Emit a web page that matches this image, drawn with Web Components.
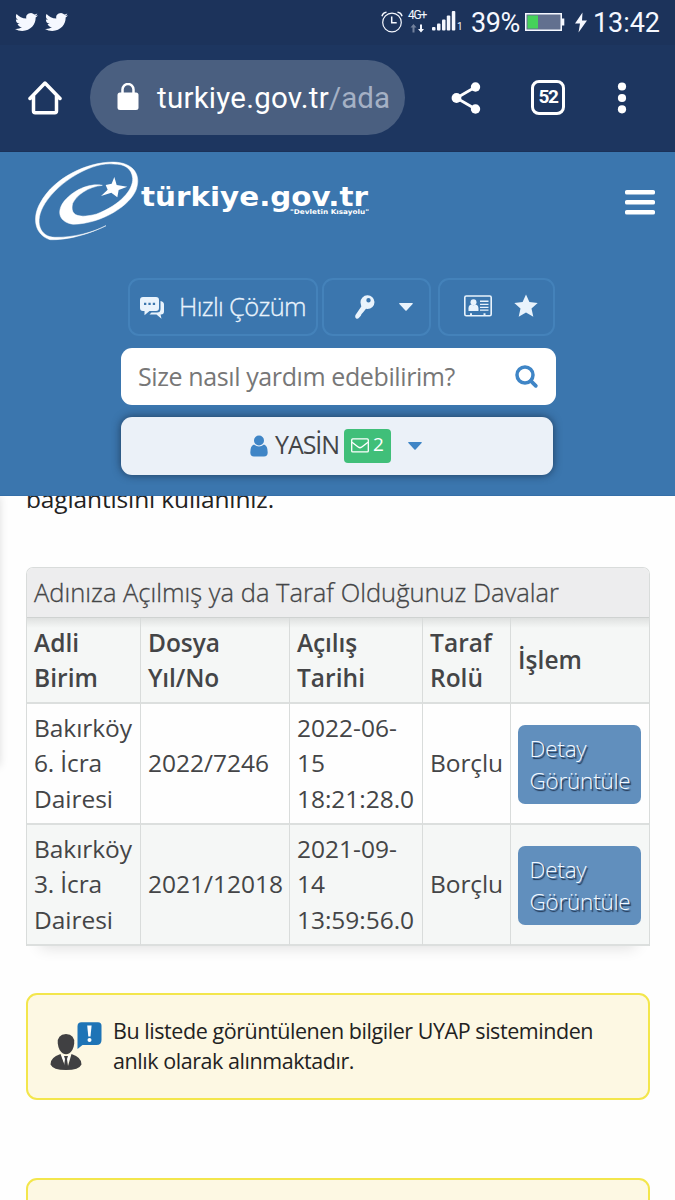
<!DOCTYPE html>
<html lang="tr">
<head>
<meta charset="utf-8">
<title>türkiye.gov.tr</title>
<style>
html,body{margin:0;background:#fefefe}
body{width:675px;height:1200px;overflow:hidden;font-family:"Open Sans","Noto Sans",sans-serif;color:#444547}
</style>
</head>
<body>
<phone-screen></phone-screen>
<script>
function define(name, markup, ready) {
  const template = document.createElement('template');
  template.innerHTML = markup;
  customElements.define(name, class extends HTMLElement {
    connectedCallback() {
      if (this.shadowRoot) return;
      this.attachShadow({ mode: 'open' }).append(template.content.cloneNode(true));
      if (ready) ready(this, this.shadowRoot);
    }
  });
}

/* One line of text, tracked so that it fills the width given in its w attribute. */
define('text-line', `<style>:host{display:block;white-space:nowrap}span{display:inline-block;white-space:pre}</style><span></span>`, (el, root) => {
  const s = root.querySelector('span');
  s.textContent = el.getAttribute('text');
  const w = +el.getAttribute('w');
  if (w) s.style.letterSpacing = ((w - s.getBoundingClientRect().width) / s.textContent.length).toFixed(3) + 'px';
});

const icons = {
  bird: ['0 0 24 24', '<path d="M23.953 4.57a10 10 0 01-2.825.775 4.958 4.958 0 002.163-2.723c-.951.555-2.005.959-3.127 1.184a4.92 4.92 0 00-8.384 4.482C7.69 8.095 4.067 6.13 1.64 3.162a4.822 4.822 0 00-.666 2.475c0 1.71.87 3.213 2.188 4.096a4.904 4.904 0 01-2.228-.616v.06a4.923 4.923 0 003.946 4.827 4.996 4.996 0 01-2.212.085 4.936 4.936 0 004.604 3.417 9.867 9.867 0 01-6.102 2.105c-.39 0-.779-.023-1.17-.067a13.995 13.995 0 007.557 2.209c9.053 0 13.998-7.496 13.998-13.985 0-.21 0-.42-.015-.63A9.935 9.935 0 0024 4.59z"/>'],
  alarm: ['0 0 22 22', '<g fill="none" stroke="currentColor" stroke-width="1.2"><circle cx="11" cy="11.5" r="9.3"/><path d="M1 5.2C1.6 2.8 3.200 1.500 5.500 1.300M21 5.200C20.400 2.800 18.800 1.500 16.500 1.300M10.700 5.500v6.200h5" stroke-width="1.500"/></g>'],
  updown: ['0 0 14 9', '<path d="M3.500 0L6.500 3.500H4.500V8.500H2.500V3.500H.5z" opacity=".4"/><path d="M11 8.500L8 5h2V.5h2V5h2z"/>'],
  signal: ['0 0 24 20', '<rect x="0" y="16" width="3.500" height="3.500" rx="1"/><rect x="5" y="12.500" width="3.500" height="7" rx="1"/><rect x="10" y="8.500" width="3.500" height="11" rx="1"/><rect x="14.800" y="4.500" width="3.500" height="15" rx="1"/><rect x="19.800" y="0" width="3.500" height="19.500" rx="1"/>'],
  battery: ['0 0 40 18', '<rect x=".75" y=".75" width="35.500" height="16.500" fill="#62708f" stroke="currentColor" stroke-width="1.500"/><rect x="2.500" y="2.500" width="10.500" height="13" fill="#45d25a"/><path d="M37 5.500h2.300v7H37z"/>'],
  bolt: ['0 0 14 22', '<path d="M8.500.5L1 12h5L4.500 21.500 13 9H8z"/>'],
  home: ['0 0 34 36', '<path d="M2 18.500L17 3l15 15.500M5.500 16v15q0 1.700 1.700 1.700h19.600q1.700 0 1.700-1.700V16" fill="none" stroke="currentColor" stroke-width="3.500" stroke-linecap="round" stroke-linejoin="round"/>'],
  lock: ['0 0 22 28', '<rect x=".5" y="9.500" width="21" height="17.500" rx="2.500"/><path d="M5.500 10V6.500a5.500 5.500 0 0111 0V10" fill="none" stroke="currentColor" stroke-width="2.500"/>'],
  share: ['0 0 30 34', '<path d="M24.500 6L5.500 17l19 11" fill="none" stroke="currentColor" stroke-width="2.800"/><circle cx="24.500" cy="6" r="4.700"/><circle cx="5.500" cy="17" r="4.900"/><circle cx="24.500" cy="28" r="4.700"/>'],
  dots: ['0 0 10 32', '<circle cx="5" cy="4.500" r="4.100"/><circle cx="5" cy="16" r="4.100"/><circle cx="5" cy="27.300" r="4.100"/>'],
  logo: ['0 0 345 270', '<path d="M228 212C150 250 90 255 60 254C15 240 5 190 30 145C75 60 190 15 262 22C310 27 335 60 318 105C300 150 220 205 130 208C95 203 80 180 95 150C115 115 170 82 217 91C175 95 140 120 128 145C118 185 150 190 200 177C270 150 310 105 308 70C305 40 285 27 250 27C190 20 90 75 45 145C10 200 30 247 75 247C130 248 190 232 228 212Z" stroke="currentColor" stroke-width="1.500"/><path d="M253 66L260 90 292 95 266 105 262 127 244 113 213 123 233 104 227 90 245 86Z"/>'],
  burger: ['0 0 30 25', '<path d="M1.800 0h26.400q1.800 0 1.800 1.500v1.500q0 1.500-1.800 1.500H1.800Q0 4.500 0 3V1.500Q0 0 1.800 0zM1.800 10h26.400q1.800 0 1.800 1.500V13q0 1.500-1.800 1.500H1.800Q0 14.500 0 13v-1.500Q0 10 1.800 10zM1.800 20h26.400q1.800 0 1.800 1.500V23q0 1.500-1.800 1.500H1.800Q0 24.500 0 23v-1.500Q0 20 1.800 20z"/>'],
  chat: ['0 0 24 22', '<path fill-rule="evenodd" d="M3 0h13q3 0 3 3v8q0 3-3 3H9.500L4.500 18.300V14H3q-3 0-3-3V3Q0 0 3 0zM4 5.700v2.300h2.300V5.700zM8.400 5.700v2.300h2.300V5.700zM12.800 5.700v2.300h2.300V5.700z"/><path d="M20.500 4Q24 4.500 24 7.500V14.500q0 3-3 3h-.5l1 4.300-5-4.300H9.500l2-2H17q3.500 0 3.500-3.500z"/>'],
  key: ['0 0 20 24', '<path fill-rule="evenodd" d="M5.500 7.500A6.900 6.900 0 0112.500.3 6.900 6.900 0 0119.500 7a7 7 0 01-7 7l-1.500-.3-2.800 3.500-1.800 2-.4 1.300-2 2.300Q2.500 24.500.9 23.200-.3 22 .5 20L6.300 11.500zM13.500 3a2.200 2.200 0 100 4.400 2.200 2.200 0 000-4.400z"/>'],
  caret: ['0 0 14 8', '<path d="M.7 0h12.600q.9.200.3 1L7.600 7.500q-.6.600-1.200 0L.4 1Q-.2.200.7 0z"/>'],
  card: ['0 0 28 22', '<rect x=".8" y="1" width="26.400" height="19.700" rx="1.500" fill="none" stroke="currentColor" stroke-width="1.600"/><circle cx="9.500" cy="7.200" r="3"/><path d="M4.500 16q-.7-6.500 3-6.500 2 1.600 4 0 3.500 0 3 6.500zM16 5.500h8.500v1.500H16zM16 8.800h8.500v1.300H16zM16 11.800h8.500v1.300H16zM16 14.500h8.500v1.300H16zM6 18.300h2V21H6zM19.500 18.300h2V21h-2z"/>'],
  star: ['0 0 24 24', '<path d="M12 .5l3.400 7.600 8.300.9-6.200 5.600 1.800 8.200L12 18.600l-7.300 4.200 1.800-8.200L.3 9l8.300-.9z"/>'],
  search: ['0 0 24 24', '<circle cx="10" cy="10" r="8" fill="none" stroke="currentColor" stroke-width="3.500"/><path d="M15.800 15.800l5 5" stroke="currentColor" stroke-width="3.800" stroke-linecap="round"/>'],
  user: ['0 0 18 22', '<circle cx="9" cy="5.500" r="5"/><path d="M4 9.500q5 3.800 10 0 3.700 1 3.700 8Q17.700 21.500 14 21.500H4Q.3 21.500.3 17.500.3 10.500 4 9.500z"/>'],
  mail: ['0 0 18 15', '<rect x=".7" y=".9" width="16.600" height="13" rx="1" fill="none" stroke="currentColor" stroke-width="1.300"/><path d="M1 4.300L7.500 9.200q1.500 1 3 0L17 4.300" fill="none" stroke="currentColor" stroke-width="1.400"/>'],
  advisor: ['0 0 52 48', '<path fill="#1e74b6" d="M31.500.3H48q3.500 0 3.500 3.500V18q0 5-5 5H32.500L27.500 27V4.300q0-4 4-4z"/><path fill="#fff" d="M37.200 3.500h4.400L40.500 14.500h-2.200z"/><circle cx="39.500" cy="18" r="2" fill="#fff"/><g fill="#404042"><path d="M16 12q9 .5 8.200 9.500Q23.500 28.500 19 31.500q-3 1.500-6 0Q8.500 28.500 7.800 21.500 7 12.500 16 12z"/><path d="M10.500 32L15 44h3L21.500 32Q32 35.500 31.500 42.500 29 48 16 48T.5 42.500Q0 35.500 10.500 32z"/></g><path fill="#fff" d="M11.500 33q4.500 2 9 0l-3.700 11h-1.600z"/><path fill="#404042" d="M14 34h4l-1 3 1 7-2 2-2-2 1-7z"/>']
};
define('app-icon', `<style>:host{display:block;flex:none}svg{display:block;width:100%;height:100%;fill:currentColor}</style>`, (el, root) => {
  const [box, body] = icons[el.getAttribute('name')];
  el.style.width = el.getAttribute('w') + 'px';
  el.style.height = el.getAttribute('h') + 'px';
  root.innerHTML += `<svg viewBox="${box}" preserveAspectRatio="none">${body}</svg>`;
});

define('status-bar', `<style>
:host{display:flex;height:45px;box-sizing:border-box;background:#1c335b;color:#f5f8ff;font-family:Roboto,sans-serif;align-items:flex-start;padding-left:15px}
app-icon,text-line,.net{flex:none}
.net{display:flex;flex-direction:column;align-items:center;margin:9px 0 0 5px;width:18px}
.net text-line{font-size:12px;line-height:13px}
.net app-icon{margin-top:2px}
.big{font-size:27px;line-height:30px;margin-top:8px}
</style>
<app-icon name="bird" w="23" h="22" style="margin-top:11px"></app-icon>
<app-icon name="bird" w="23" h="22" style="margin:11px 0 0 7px"></app-icon>
<app-icon name="alarm" w="22" h="22" style="margin:11px 0 0 313px"></app-icon>
<div class="net"><text-line text="4G+" w="18"></text-line><app-icon name="updown" w="14" h="9"></app-icon></div>
<app-icon name="signal" w="24" h="20" style="margin:11px 0 0 6px"></app-icon>
<text-line text="1" style="font-size:10px;line-height:12px;margin:21px 0 0 1px;width:7px"></text-line>
<text-line class="big" text="39%" w="49" style="margin-left:7px;width:54px"></text-line>
<app-icon name="battery" w="40" h="18" style="margin:13px 0 0 0"></app-icon>
<app-icon name="bolt" w="14" h="21" style="margin:12px 0 0 9px"></app-icon>
<text-line class="big" text="13:42" w="67" style="margin-left:5px"></text-line>`);

define('browser-bar', `<style>
:host{display:flex;height:107px;box-sizing:border-box;background:#1d3660;color:#fff;align-items:center;padding-left:28px;font-family:Roboto,sans-serif;border-bottom:1px solid #1b3259}
.pill{display:flex;align-items:center;width:315px;height:75px;box-sizing:border-box;border-radius:38px;background:#4a5f80;margin:-2px 0 0 28px;padding-left:27px;flex:none;font-size:29.500px}
.path{color:#a5b1c5}
.tabs{box-sizing:border-box;width:34px;height:35px;border:3.500px solid #fff;border-radius:8px;margin:-2px 0 0 50px;flex:none;display:flex;align-items:center;justify-content:center;font-size:19px;font-weight:700;line-height:20px}
</style>
<app-icon name="home" w="34" h="36"></app-icon>
<div class="pill"><app-icon name="lock" w="22" h="28"></app-icon><text-line text="turkiye.gov.tr" w="172" style="margin-left:18px;margin-top:1px"></text-line><text-line class="path" text="/ada" w="61" style="margin-top:1px"></text-line></div>
<app-icon name="share" w="30" h="34" style="margin-left:46px"></app-icon>
<div class="tabs"><text-line text="52" w="19"></text-line></div>
<app-icon name="dots" w="10" h="32" style="margin-left:52px"></app-icon>`);

define('quick-button', `<style>
:host{display:flex;box-sizing:border-box;height:58px;border:2px solid #4482ba;border-radius:11px;align-items:center;color:#e9f3fc;font-size:25.500px;font-weight:300;-webkit-text-stroke:.3px #e9f3fc}
</style><slot></slot>`);

define('search-box', `<style>
:host{display:flex;box-sizing:border-box;width:435px;height:57px;border-radius:11px;background:#fff;align-items:center;padding:0 17px;font-size:25px;color:#777}
text-line{margin-top:-2px}
app-icon{margin-left:auto;color:#3f85c6}
</style><text-line text="Size nasıl yardım edebilirim?" w="317"></text-line><app-icon name="search" w="24" h="24"></app-icon>`);

define('user-button', `<style>
:host{display:flex;box-sizing:border-box;width:432px;height:58px;border-radius:11px;background:#ebf1f8;align-items:center;padding-left:129px;font-size:25px;color:#444547;box-shadow:0 0 9px rgba(20,35,55,.7)}
.badge{display:flex;align-items:center;box-sizing:border-box;width:47px;height:34px;border-radius:4px;background:#40bf79;color:#fff;margin:-1px 0 0 5px;padding-left:7px;font-size:19px}
</style>
<app-icon name="user" w="18" h="22" style="color:#3f85c6;margin-top:-1px"></app-icon>
<text-line text="YASİN" w="64" style="margin:-4px 0 0 7px"></text-line>
<div class="badge"><app-icon name="mail" w="18" h="15" style="margin-top:-1px"></app-icon><text-line text="2" style="margin:-4px 0 0 4px"></text-line></div>
<app-icon name="caret" w="14" h="8" style="color:#3f85c6;margin-left:17px"></app-icon>`);

define('brand-logo', `<style>
:host{display:flex}
svg{display:block;overflow:visible;margin:27px 0 0 -4px}
text{font-family:"DejaVu Sans",sans-serif;font-weight:700;fill:#fff}
</style>
<app-icon name="logo" w="115" h="90"></app-icon>
<svg width="228" height="45"><text x="0" y="23.700" font-size="26" textLength="227" lengthAdjust="spacingAndGlyphs">türkiye.gov.tr</text><text x="149" y="32" font-size="6.500" textLength="79" lengthAdjust="spacingAndGlyphs">"Devletin Kısayolu"</text></svg>`);

define('gov-header', `<style>
:host{display:block;box-sizing:border-box;height:344px;background:#3b76ae;color:#fff;border-bottom:1px solid #356fa8;position:relative;z-index:1}
.top{display:flex;justify-content:space-between;padding:3px 20px 0 30px;height:123px}
.quick{display:flex;padding-left:128px}
search-box{margin:12px 0 0 121px}
user-button{margin:12px 0 0 121px}
</style>
<div class="top"><brand-logo></brand-logo><app-icon name="burger" w="30" h="25" style="margin-top:35px"></app-icon></div>
<div class="quick">
<quick-button style="width:190px"><app-icon name="chat" w="24" h="22" style="margin-left:10px;margin-top:1px"></app-icon><text-line text="Hızlı Çözüm" w="127" style="margin-left:15px;margin-top:-3px"></text-line></quick-button>
<quick-button style="width:109px;margin-left:4px"><app-icon name="key" w="20" h="24" style="margin-left:31px;margin-top:-1px"></app-icon><app-icon name="caret" w="14" h="8" style="margin-left:24px"></app-icon></quick-button>
<quick-button style="width:117px;margin-left:7px"><app-icon name="card" w="28" h="22" style="margin-left:24px;margin-top:-2px"></app-icon><app-icon name="star" w="24" h="24" style="margin-left:22px;margin-top:-3px"></app-icon></quick-button>
</div>
<search-box></search-box>
<user-button></user-button>`);

define('detail-button', `<style>
:host{display:block;box-sizing:border-box;width:123px;height:79px;border-radius:7px;background:#618fbd;color:#f4f9ff;font-size:22.500px;font-weight:300;line-height:32px;padding:8px 0 0 11.500px;margin-top:2px;text-shadow:1.500px 1.500px 1px rgba(20,35,60,.85)}
</style><text-line text="Detay" w="57"></text-line><text-line text="Görüntüle" w="101"></text-line>`);

define('table-cell', `<style>
:host{display:flex;flex-direction:column;justify-content:center;box-sizing:border-box;padding-left:7px;border-right:1.500px solid #d9dcdb;border-bottom:2px solid #dcdfde;line-height:35.300px}
</style><slot></slot>`);

define('case-table', `<style>
:host{display:block;box-sizing:border-box;width:624px;border:1.500px solid #d9dcdb;border-bottom:0;border-radius:7px 7px 0 0;font-size:24.500px;box-shadow:0 16px 14px -14px rgba(0,0,0,.12)}
.title{box-sizing:border-box;height:50px;padding:0 0 0 7px;line-height:49px;background:#ededee;border-radius:6px 6px 0 0;border-bottom:1px solid #cfd2d1;font-size:25.500px;font-weight:300;-webkit-text-stroke:.3px #444547}
.grid{display:grid;grid-template-columns:114px 149px 133px 88px 138px;grid-template-rows:86px 121px 121px}
.h{font-weight:600;background:linear-gradient(#dfe1e0,#f5f7f6 10px)}
.odd{background:#f5f7f6}
.even{background:#fefefe}
.odd,.even{padding-bottom:1px}
table-cell:nth-child(5n){border-right:0}
</style>
<div class="title"><text-line text="Adınıza Açılmış ya da Taraf Olduğunuz Davalar" w="525"></text-line></div>
<div class="grid"></div>`, (el, root) => {
  const rows = [
    ['h', [['Adli', 45], ['Birim', 64]], [['Dosya', 72], ['Yıl/No', 71]], [['Açılış', 60], ['Tarihi', 68]], [['Taraf', 62], ['Rolü', 53]], [['İşlem', 64]]],
    ['even', [['Bakırköy', 98], ['6. İcra', 68], ['Dairesi', 79]], [['2022/7246', 121]], [['2022-06-', 100], ['15', 28], ['18:21:28.0', 117]], [['Borçlu', 73]], null],
    ['odd', [['Bakırköy', 98], ['3. İcra', 68], ['Dairesi', 79]], [['2021/12018', 135]], [['2021-09-', 100], ['14', 28], ['13:59:56.0', 117]], [['Borçlu', 73]], null]
  ];
  root.querySelector('.grid').innerHTML = rows.map(([tone, ...cells]) => cells.map(c =>
    `<table-cell class="${tone}">${c ? c.map(([t, w]) => `<text-line text="${t}" w="${w}"></text-line>`).join('') : '<detail-button></detail-button>'}</table-cell>`).join('')).join('');
});

define('notice-box', `<style>
:host{display:flex;box-sizing:border-box;width:624px;height:107px;border:2px solid #f3e64c;border-radius:11px;background:#fdf8e3;color:#222;font-size:21.500px;line-height:30px}
</style><slot></slot>`);

define('page-content', `<style>
:host{display:block;padding:0 0 0 26px;height:705px;position:relative;overflow:hidden}
.edge{position:absolute;left:-10px;top:0;width:10px;height:270px;box-shadow:0 0 9px rgba(0,0,0,.13)}
.intro{font-size:24.500px;line-height:36px;margin-top:-15px;color:#222}
case-table{margin-top:50px}
notice-box{margin-top:47px}
notice-box + notice-box{margin-top:78px}
.lines{margin:21px 0 0 11px}
</style>
<div class="edge"></div>
<text-line class="intro" text="bağlantısını kullanınız." w="248"></text-line>
<case-table></case-table>
<notice-box><app-icon name="advisor" w="52" h="48" style="margin:27px 0 0 22px"></app-icon><div class="lines"><text-line text="Bu listede görüntülenen bilgiler UYAP sisteminden" w="480"></text-line><text-line text="anlık olarak alınmaktadır." w="241"></text-line></div></notice-box>
<notice-box></notice-box>`);

define('phone-screen', `<style>:host{display:block;width:675px;height:1200px;overflow:hidden}</style>
<status-bar></status-bar><browser-bar></browser-bar><gov-header></gov-header><page-content></page-content>`);
</script>
</body>
</html>
